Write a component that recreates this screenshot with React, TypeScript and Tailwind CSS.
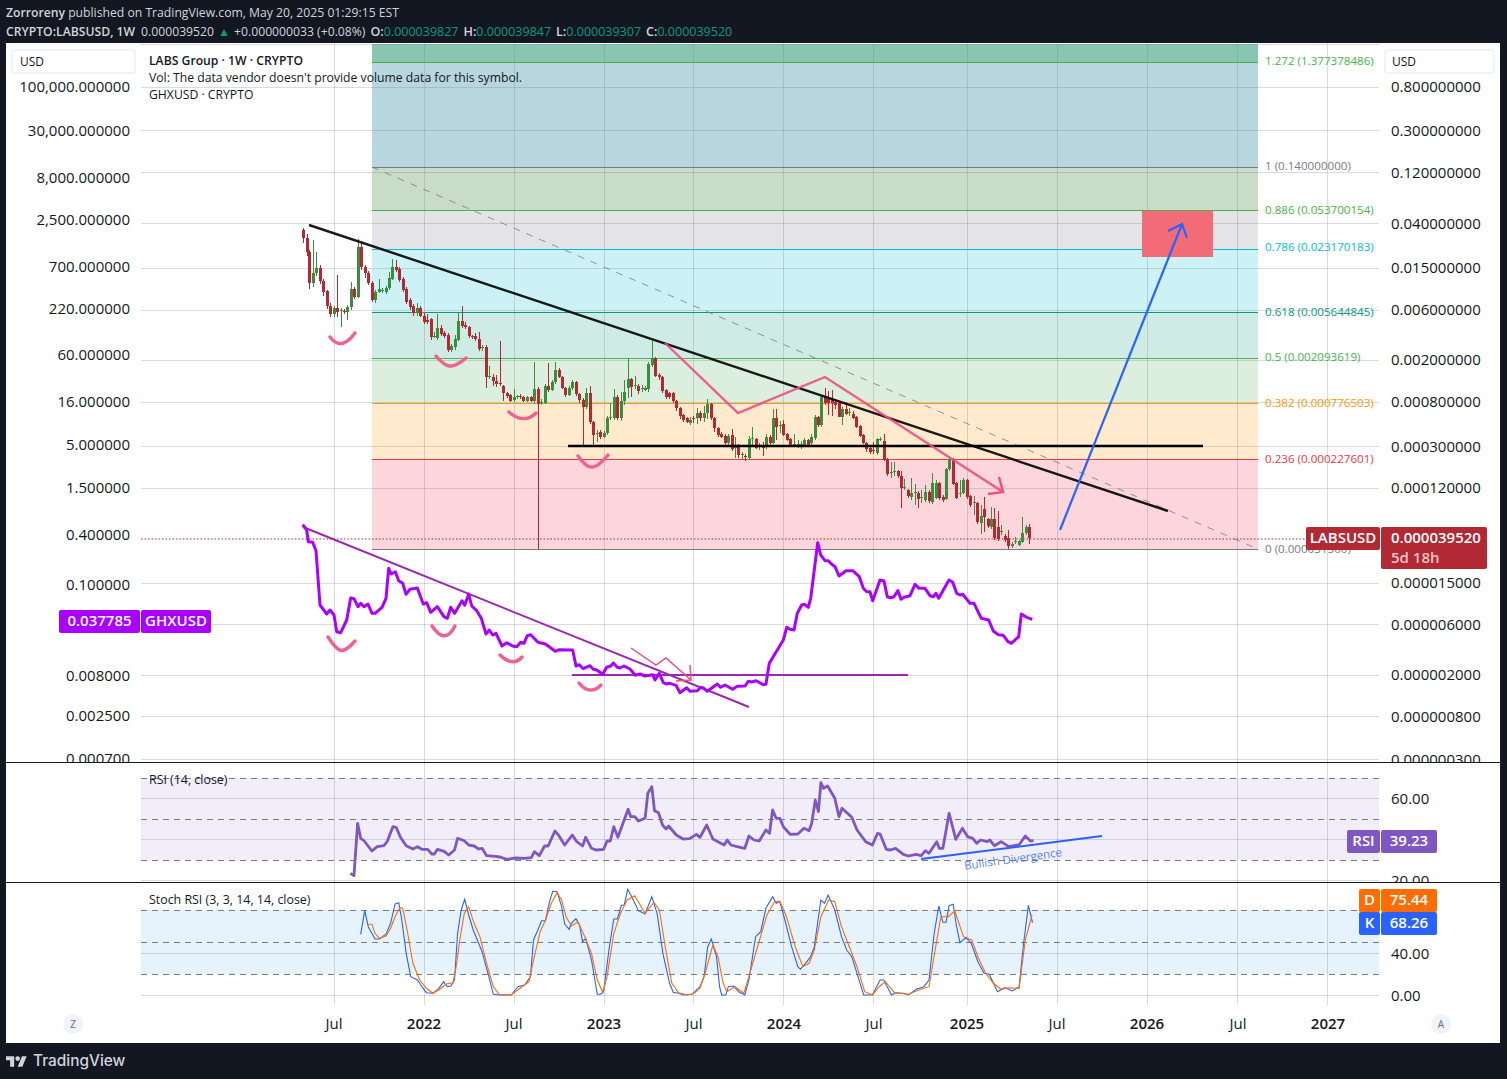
// weekly candles read off the chart: [x, open y, close y, wick top?, wick bottom?]
type Candle = [number, number, number, number?, number?]

const CANDLES_A: Candle[] = [
  [40,230,238,228,243],[50,238,252,234,256],[58,252,283,250,289],[70,283,273,240,287],[79,273,268,252,276],[91,268,281,265,284],[100,281,292,279,296],[112,291,306,290,309],[121,306,314,303,317],[133,314,308,306,317],[142,308,312,275,317],[154,311,310,308,327],[163,311,312,309,314],[172,312,307,305,320],[184,307,289,282,310],[193,289,297,287,299],[205,297,247,239,298],[214,247,267,243,270],[226,267,273,265,278],[235,273,283,271,285],[247,283,300,281,302],[256,300,292,290,303],[268,292,289,279,293],[277,291,290,288,293],[289,292,288,286,294],[298,288,278,272,290],[307,279,267,259,280],[319,267,270,260,272],[328,269,280,267,282],[340,279,290,277,292],[349,289,302,287,304],[361,300,307,298,310],[370,306,313,304,316],[382,313,308,303,316],[391,308,316,306,317],[403,316,322,313,324],[412,320,322,314,324],[424,319,337,318,340],[433,337,336,332,338],[442,338,328,314,340],[454,328,334,325,336],[463,333,336,331,338],[475,335,350,333,352],[484,350,346,344,352],[496,347,339,335,350],[505,340,321,313,341],[517,321,326,306,328],[526,325,327,322,329],[538,327,336,326,338],[547,336,337,335,339],[556,336,339,333,341],[568,339,349,332,351],[577,348,347,345,351],[589,347,377,345,388],[598,377,376,366,379],[610,377,381,374,386],[619,381,384,375,387],[631,383,384,341,386],[640,386,393,385,401],[652,393,396,392,398],[661,395,401,394,402],[673,400,397,389,402],[682,397,396,395,399],[691,396,397,394,399],[700,397,401,396,402],[712,401,397,396,402],[724,397,401,396,402],[733,401,389,362,404],[745,389,404,387,549],[754,403,402,399,405],[766,403,386,384,404],[775,386,390,363,392],[787,390,382,380,391],[796,382,370,362,384],[808,370,377,368,378],[817,377,388,376,389],[826,388,395,387,397],[838,395,388,386,396],[847,388,382,380,390],[859,382,394,381,396],[868,394,400,393,403],[880,400,407,398,446],[889,407,393,388,409],[901,393,422,386,424],[910,422,435,421,446],[922,434,433,430,442],[931,432,437,430,439],[943,437,433,431,438],[952,433,418,416,435],[961,418,417,403,420],[973,418,397,389,420],[982,397,418,395,420],[994,418,401,392,421],[1003,401,392,380,405],[1015,388,379,358,398],[1024,379,387,378,397],[1036,386,385,376,389],[1045,386,391,384,394],[1057,389,388,385,392],[1066,390,388,386,391],[1075,389,364,362,392],[1087,365,358,341,367],[1096,358,376,357,377],[1108,375,377,373,380],[1117,377,391,376,393],[1129,390,397,389,399],[1138,393,397,392,399],[1150,393,401,392,403],[1159,401,408,400,411],[1171,408,416,407,419],[1180,415,420,414,422],[1192,418,422,417,423],
]

const CANDLES_B: Candle[] = [
  [0,423,420,417,425],[10,418,419,416,423],[22,418,413,408,424],[31,413,418,411,421],[43,418,413,406,422],[52,413,404,399,419],[64,404,418,403,420],[73,418,428,417,432],[85,428,435,427,437],[94,434,437,432,438],[106,436,443,434,446],[115,443,436,434,445],[127,435,449,429,451],[136,448,445,437,458],[145,445,455,444,458],[157,455,454,452,459],[166,456,457,454,461],[178,458,439,436,459],[187,439,438,427,447],[199,439,448,438,449],[208,447,446,443,450],[220,446,448,442,456],[229,447,437,434,449],[241,437,443,435,447],[250,443,418,409,444],[259,418,427,409,440],[271,426,425,421,433],[280,424,435,420,436],[292,434,440,433,441],[301,439,445,438,447],[313,445,444,434,447],[325,445,444,440,448],[334,445,444,441,449],[343,445,440,438,447],[355,440,445,439,446],[364,443,437,434,445],[376,438,417,415,440],[385,417,425,416,427],[394,425,397,397,427],[406,397,403,388,405],[415,399,403,391,415],[427,399,403,390,416],[436,402,405,399,409],[448,403,417,401,417],[457,417,409,407,425],[469,409,414,402,415],[478,413,412,408,416],[490,414,418,411,419],[499,417,427,416,428],[511,426,436,425,437],[520,435,443,434,444],[529,443,449,442,452],[541,448,452,447,454],[550,450,451,442,454],[562,453,439,438,455],[571,440,439,437,441],[583,441,460,434,461],[592,459,474,458,476],[604,473,472,462,478],[613,472,471,462,476],[625,471,476,470,478],[634,476,488,471,508],[643,488,487,479,490],[655,490,496,489,498],[664,497,493,478,500],[676,493,492,484,505],[685,493,499,491,508],[694,498,497,490,503],[706,500,492,485,502],[718,492,501,490,503],[727,502,483,473,504],[739,498,483,480,499],[748,483,498,482,500],[760,497,500,495,502],[769,499,469,468,500],[778,469,459,457,471],[790,459,484,458,485],[799,483,498,482,499],[811,494,493,480,497],[820,493,480,478,494],[832,480,497,479,499],[841,496,505,495,507],[853,503,502,496,515],[862,503,522,502,524],[874,523,516,505,534],[883,509,517,497,532],[895,519,526,518,528],[904,527,519,507,529],[913,519,538,508,540],[925,527,539,511,541],[934,532,531,525,535],[946,536,540,534,542],[955,538,546,530,549],[967,546,544,542,548],[976,542,541,537,544],[988,545,541,540,546],[997,542,533,517,543],[1009,533,527,525,535],[1018,527,538,524,544],
]

// points are pixel readings from crops, mapped back to page coordinates
const at = (pts: number[][], ox: number, oy: number, sx: number, sy: number) =>
  pts.map(([x, y]) => `${(ox + x / sx).toFixed(1)},${(oy + y / sy).toFixed(1)}`).join(' ')

const GHX_A = [[38,14],[50,30],[55,65],[68,67],[78,92],[90,255],[110,282],[120,270],[132,285],[140,335],[152,338],[170,300],[182,234],[192,236],[204,260],[212,250],[222,260],[234,252],[246,280],[255,280],[276,262],[288,235],[296,145],[304,162],[316,155],[326,182],[338,190],[348,223],[360,208],[382,204],[400,252],[410,248],[422,277],[442,260],[462,290],[472,295],[482,262],[494,280],[516,242],[524,256],[536,222],[545,258],[560,272],[574,295],[588,342],[598,330],[608,345],[618,340],[636,378],[650,368],[668,378],[680,380],[692,367],[702,370],[712,347],[722,344],[744,367],[766,372],[796,394],[808,389],[848,390],[858,438],[868,434],[880,446],[900,437],[910,448],[920,450],[938,463],[950,442],[962,438],[970,429],[982,442],[990,444],[1002,438],[1020,447],[1036,466],[1050,462],[1065,468],[1088,464],[1095,480],[1108,460],[1120,488],[1130,492],[1140,490],[1158,496],[1170,518],[1190,503],[1200,514],[1222,512],[1232,502],[1240,504],[1252,514],[1282,492],[1292,502],[1305,495],[1328,508],[1342,499],[1365,498],[1375,484],[1385,486],[1398,482],[1420,494],[1428,492],[1438,430]]
const GHX_B = [[40,330],[50,292],[60,298],[72,300],[82,250],[95,225],[103,223],[115,232],[122,205],[143,38],[152,75],[165,92],[175,92],[185,103],[195,110],[207,138],[228,122],[248,122],[268,140],[280,175],[290,185],[300,185],[308,212],[330,150],[342,153],[352,200],[362,203],[372,200],[384,182],[393,208],[402,202],[420,197],[435,163],[448,175],[465,175],[480,197],[490,200],[498,190],[506,205],[537,150],[548,157],[560,190],[570,195],[578,193],[600,220],[612,220],[634,265],[656,270],[670,303],[685,314],[700,316],[714,335],[724,340],[746,320],[754,252],[770,262],[787,268]]

const RSI_A = [[785,340],[793,347],[801,190],[808,235],[816,243],[833,273],[845,260],[860,257],[867,245],[880,200],[888,203],[897,232],[910,257],[925,267],[935,260],[945,268],[958,268],[967,282],[973,282],[980,268],[995,274],[1005,285],[1018,270],[1025,235],[1040,242],[1050,255],[1062,258],[1072,267],[1080,265],[1090,287],[1110,289],[1120,291],[1135,298],[1155,294],[1175,295],[1190,293],[1197,275],[1208,287],[1220,258],[1228,258],[1243,213],[1252,227],[1265,255],[1282,225],[1292,245],[1305,258],[1312,232],[1325,265],[1335,270],[1352,268],[1360,243],[1367,243],[1375,200],[1384,232],[1407,148],[1413,170],[1422,170],[1430,183],[1445,175],[1451,100],[1460,80],[1466,152],[1475,158],[1484,195],[1492,207],[1498,198],[1515,225],[1530,237],[1545,236],[1560,223],[1568,232]]
const RSI_B = [[13,195],[25,237],[35,245],[47,255],[53,240],[60,255],[72,260],[87,265],[95,228],[105,240],[115,243],[128,210],[135,220],[141,150],[148,175],[155,175],[162,200],[175,223],[190,222],[202,205],[212,212],[217,190],[224,120],[230,155],[235,68],[240,85],[248,78],[262,115],[270,170],[276,145],[295,172],[305,210],[322,245],[335,255],[345,220],[350,222],[362,268],[370,270],[380,265],[395,283],[405,288],[420,283],[430,287],[438,272],[445,280],[460,245],[465,265],[472,265],[484,160],[497,238],[510,205],[520,230],[530,235],[538,250],[545,240],[558,245],[563,240],[572,257],[585,245],[600,260],[620,254],[632,228],[642,243],[648,242]]

const K_A = [[808,523],[817,452],[825,500],[840,537],[850,537],[865,522],[875,490],[885,432],[893,428],[900,480],[910,580],[920,650],[935,660],[945,680],[955,698],[970,700],[983,685],[994,665],[1002,680],[1010,678],[1018,660],[1025,520],[1033,450],[1041,418],[1050,465],[1060,510],[1080,575],[1095,650],[1105,703],[1120,705],[1145,705],[1160,680],[1175,675],[1188,650],[1195,540],[1205,510],[1213,482],[1222,482],[1230,430],[1238,394],[1248,395],[1258,440],[1265,492],[1275,508],[1280,490],[1290,476],[1298,495],[1305,545],[1312,535],[1325,600],[1338,703],[1345,703],[1352,695],[1365,560],[1375,477],[1383,477],[1392,436],[1398,436],[1406,388],[1415,410],[1430,452],[1445,462],[1460,410],[1472,460],[1485,580],[1500,670],[1508,697],[1520,700],[1530,705],[1550,703],[1568,680]]
const K_B = [[8,650],[15,560],[22,537],[32,590],[38,680],[42,705],[50,705],[55,680],[65,678],[75,695],[87,705],[95,660],[108,530],[118,515],[128,445],[141,410],[148,430],[155,425],[165,480],[178,560],[190,620],[195,628],[205,610],[215,590],[222,560],[235,420],[242,430],[249,405],[262,450],[275,530],[285,570],[295,590],[305,640],[318,705],[335,705],[350,660],[357,660],[372,705],[380,698],[395,700],[405,705],[420,688],[435,680],[445,660],[455,520],[464,438],[472,487],[478,487],[484,437],[492,433],[498,495],[505,548],[517,532],[527,550],[540,605],[552,640],[562,643],[578,695],[592,683],[607,693],[620,680],[628,560],[638,436],[646,488]]
const D_A = [[825,493],[833,493],[840,520],[850,535],[865,527],[875,505],[885,470],[895,443],[902,445],[912,510],[925,610],[940,660],[955,685],[970,700],[985,688],[1000,672],[1015,668],[1022,620],[1030,540],[1040,460],[1050,440],[1062,490],[1075,530],[1090,610],[1105,680],[1118,703],[1145,705],[1165,685],[1185,665],[1195,600],[1210,515],[1222,480],[1235,430],[1248,398],[1258,420],[1268,470],[1280,497],[1295,487],[1310,530],[1325,580],[1338,660],[1350,697],[1360,650],[1375,520],[1390,460],[1405,420],[1422,407],[1445,460],[1465,427],[1477,450],[1490,560],[1505,670],[1520,698],[1540,705],[1555,700],[1568,685]]
const D_B = [[10,640],[25,555],[35,590],[45,670],[52,695],[68,680],[85,700],[95,650],[110,570],[130,465],[145,425],[155,423],[168,470],[185,560],[200,620],[212,610],[222,570],[235,470],[250,420],[262,425],[275,500],[290,560],[305,620],[320,695],[335,705],[348,680],[360,665],[378,698],[405,703],[425,690],[445,680],[458,560],[468,470],[482,470],[495,453],[512,530],[528,540],[540,590],[555,640],[570,670],[585,688],[600,683],[620,685],[632,540],[645,465]]

const V_GRID = [334, 424, 514, 604, 693, 783, 873, 967, 1057, 1147, 1237, 1327]
const H_GRID = [44, 87, 130, 172, 223, 268, 310, 360, 402, 446, 488, 583, 624, 675, 716, 759]

const BANDS = [
  { y1: 44, y2: 62, fill: '#89c6b2' },
  { y1: 62, y2: 167, fill: '#b8d6dd' },
  { y1: 167, y2: 210, fill: '#c9dcc8' },
  { y1: 210, y2: 249, fill: '#e4e4e6' },
  { y1: 249, y2: 312, fill: '#ccf2f6' },
  { y1: 312, y2: 358, fill: '#cfebe6' },
  { y1: 358, y2: 403, fill: '#dceedd' },
  { y1: 403, y2: 459, fill: '#ffeacd' },
  { y1: 459, y2: 549, fill: '#fcd6da' },
]

const FIBS = [
  { y: 62, ty: 61, color: '#4caf50', label: '1.272 (1.377378486)' },
  { y: 167, ty: 166, color: '#787b86', label: '1 (0.140000000)' },
  { y: 210, ty: 210, color: '#4caf50', label: '0.886 (0.053700154)' },
  { y: 249, ty: 247, color: '#00bcd4', label: '0.786 (0.023170183)' },
  { y: 312, ty: 312, color: '#089981', label: '0.618 (0.005644845)' },
  { y: 358, ty: 357, color: '#4caf50', label: '0.5 (0.002093619)' },
  { y: 403, ty: 403, color: '#ff9800', label: '0.382 (0.000776503)' },
  { y: 459, ty: 459, color: '#f23645', label: '0.236 (0.000227601)' },
  { y: 549, ty: 549, color: '#787b86', label: '0 (0.000031500)' },
]

const LEFT_AXIS: [number, string][] = [
  [86, '100,000.000000'], [130, '30,000.000000'], [177, '8,000.000000'], [219, '2,500.000000'],
  [266, '700.000000'], [308, '220.000000'], [354, '60.000000'], [401, '16.000000'],
  [444, '5.000000'], [487, '1.500000'], [534, '0.400000'], [584, '0.100000'],
  [625, '0.030000'], [675, '0.008000'], [715, '0.002500'], [758, '0.000700'],
]
const RIGHT_AXIS: [number, string][] = [
  [86, '0.800000000'], [130, '0.300000000'], [172, '0.120000000'], [223, '0.040000000'],
  [267, '0.015000000'], [309, '0.006000000'], [359, '0.002000000'], [401, '0.000800000'],
  [446, '0.000300000'], [487, '0.000120000'], [582, '0.000015000'], [624, '0.000006000'],
  [674, '0.000002000'], [716, '0.000000800'], [759, '0.000000300'],
]
const TIME_AXIS: [number, string, boolean][] = [
  [334, 'Jul', false], [424, '2022', true], [514, 'Jul', false], [604, '2023', true],
  [694, 'Jul', false], [784, '2024', true], [874, 'Jul', false], [967, '2025', true],
  [1057, 'Jul', false], [1147, '2026', true], [1238, 'Jul', false], [1328, '2027', true],
]

const OHLC = [
  ['O:', '0.000039827'], ['H:', '0.000039847'], ['L:', '0.000039307'], ['C:', '0.000039520'],
]

// hand-drawn pink smiles under the lows
const SMILES = [
  'M330 337C336 345 344 348 355 333', 'M436 356C446 368 452 370 466 358',
  'M509 412C518 420 528 421 536 413', 'M578 456C588 470 594 472 608 455',
  'M328 637C338 652 342 656 355 641', 'M432 626C440 638 448 640 455 626',
  'M500 655C508 663 516 664 522 657', 'M579 683C586 692 594 692 601 685',
]

function Candles({ data, ox }: { data: Candle[]; ox: number }) {
  return (
    <g shapeRendering="crispEdges">
      {data.map(([zx, o, c, wt, wb]) => {
        const x = Math.round(ox + zx / 3)
        const top = Math.min(o, c)
        const h = Math.max(Math.abs(o - c), 1)
        const color = c < o ? '#388e3c' : '#b22833'
        return (
          <g key={zx} fill={color}>
            <rect x={x} y={wt ?? top - 2} width={1} height={(wb ?? top + h + 2) - (wt ?? top - 2)} />
            <rect x={x - 1} y={top} width={3} height={h} />
          </g>
        )
      })}
    </g>
  )
}

function VGrid({ y1, y2 }: { y1: number; y2: number }) {
  return (
    <g stroke="#787b86" strokeOpacity={0.27} shapeRendering="crispEdges">
      {V_GRID.map((x) => <line key={x} x1={x + 0.5} x2={x + 0.5} y1={y1} y2={y2} />)}
    </g>
  )
}

function HGrid({ ys }: { ys: number[] }) {
  return (
    <g stroke="#787b86" strokeOpacity={0.27} shapeRendering="crispEdges">
      {ys.map((y) => <line key={y} x1={141} x2={1379} y1={y + 0.5} y2={y + 0.5} />)}
    </g>
  )
}

function Dashed({ y }: { y: number }) {
  return <line x1={141} x2={1379} y1={y + 0.5} y2={y + 0.5} stroke="#787b86" strokeDasharray="6 5" shapeRendering="crispEdges" />
}

function MainPlot() {
  return (
    <svg width={1238} height={719} viewBox="141 43 1238 719" className="block shrink-0">
      {BANDS.map((b) => <rect key={b.y1} x={372} y={b.y1} width={886} height={b.y2 - b.y1} fill={b.fill} />)}
      <VGrid y1={43} y2={762} />
      <HGrid ys={H_GRID} />
      {FIBS.map((f) => (
        <g key={f.y}>
          <line x1={372} x2={1258} y1={f.y + 0.5} y2={f.y + 0.5} stroke={f.color} shapeRendering="crispEdges" />
          <text x={1265} y={f.ty} dy="0.35em" fontSize={11.6} fill={f.color}>{f.label}</text>
        </g>
      ))}
      <rect x={1142} y={211} width={71} height={46} fill="#f26c78" />
      <line x1={372} y1={167} x2={1258} y2={549} stroke="#787b86" strokeOpacity={0.8} strokeDasharray="7 7" />
      <line x1={141} x2={1306} y1={539} y2={539} stroke="#b22833" strokeDasharray="1.5 2" />
      <Candles data={CANDLES_A} ox={290} />
      <Candles data={CANDLES_B} ox={690} />
      <line x1={309} y1={225} x2={1168} y2={511} stroke="#000" strokeOpacity={0.9} strokeWidth={2.4} />
      <line x1={568} x2={1203} y1={446} y2={446} stroke="#000" strokeWidth={2.4} />
      <polyline points="665,343 738,413 825,377 1003,492" fill="none" stroke="#ec4f80" strokeWidth={2.4} strokeOpacity={0.9} />
      <polyline points="999,477 1003,492 988,494" fill="none" stroke="#ec4f80" strokeWidth={2.4} />
      <polyline points="1060,530 1182,224" fill="none" stroke="#2962ff" strokeWidth={2.2} />
      <polyline points="1168,231 1182,224 1187,238" fill="none" stroke="#2962ff" strokeWidth={2.2} />
      {SMILES.map((d) => (
        <path key={d} d={d} fill="none" stroke="#f06292" strokeWidth={3.5} strokeLinecap="round" />
      ))}
      <line x1={303} y1={527} x2={749} y2={707} stroke="#9c27b0" strokeWidth={2} />
      <line x1={572} x2={908} y1={675} y2={675} stroke="#9c27b0" strokeWidth={2} />
      <polyline points={`${at(GHX_A, 290, 520, 3, 3)} ${at(GHX_B, 770, 530, 3, 3)}`} fill="none" stroke="#aa00ff" strokeWidth={3} strokeLinejoin="round" />
      <polyline points="631,648 656,665 666,658 691,680" fill="none" stroke="#ec4f80" strokeWidth={1.5} />
      <polyline points="690,665 691,680 676,681" fill="none" stroke="#ec4f80" strokeWidth={1.5} />
    </svg>
  )
}

function RsiPlot() {
  return (
    <svg width={1238} height={119} viewBox="141 763 1238 119" className="block shrink-0">
      <rect x={141} y={778} width={1238} height={82} fill="#f2eef9" />
      <VGrid y1={763} y2={882} />
      <HGrid ys={[798, 839, 880]} />
      <Dashed y={778} />
      <Dashed y={819} />
      <Dashed y={860} />
      <polyline points={`${at(RSI_A, 0, 760, 2.24, 3)} ${at(RSI_B, 700, 760, 1.943, 3)}`} fill="none" stroke="#7e57c2" strokeWidth={2.8} strokeLinejoin="round" />
      <line x1={921} y1={859} x2={1102} y2={836} stroke="#2962ff" strokeWidth={2} />
      <text x={1013} y={859} dy="0.35em" textAnchor="middle" fontSize={11.5} fill="#2962ff" fillOpacity={0.8} transform="rotate(-8 1013 859)">Bullish Divergence</text>
    </svg>
  )
}

function StochPlot() {
  return (
    <svg width={1238} height={122} viewBox="141 883 1238 122" className="block shrink-0">
      <rect x={141} y={910} width={1238} height={64} fill="#e6f3fd" />
      <VGrid y1={883} y2={1005} />
      <HGrid ys={[953, 995]} />
      <Dashed y={910} />
      <Dashed y={942} />
      <Dashed y={974} />
      <polyline points={`${at(K_A, 0, 760, 2.24, 3)} ${at(K_B, 700, 760, 1.943, 3)}`} fill="none" stroke="#2962ff" strokeWidth={1.1} />
      <polyline points={`${at(D_A, 0, 760, 2.24, 3)} ${at(D_B, 700, 760, 1.943, 3)}`} fill="none" stroke="#ff6d00" strokeWidth={1.1} />
    </svg>
  )
}

function AxisLabels({ items, paneTop, side }: { items: [number, string][]; paneTop: number; side: 'left' | 'right' }) {
  return (
    <>
      {items.map(([y, label]) => (
        <span
          key={label}
          className={side === 'left'
            ? 'absolute right-[11px] text-[15px] leading-[20px] text-[#131722] whitespace-nowrap'
            : 'absolute left-[12px] text-[15px] leading-[20px] text-[#131722] whitespace-nowrap'}
          style={{ top: y - paneTop - 10 }}
        >
          {label}
        </span>
      ))}
    </>
  )
}

function UsdButton({ className }: { className: string }) {
  return (
    <div className={`mt-[6px] flex h-[25px] items-center rounded border-2 border-[#f0f3fa] bg-white text-[12px] text-[#131722] ${className}`}>USD</div>
  )
}

function Tag({ className, children }: { className: string; children: React.ReactNode }) {
  return <div className={`flex items-center justify-center rounded-[2px] pb-[2px] text-[15px] font-semibold text-white ${className}`}>{children}</div>
}

function RoundBtn({ label }: { label: string }) {
  return (
    <div className="flex h-[20px] w-[20px] items-center justify-center rounded-full bg-[#f0f3fa] text-[10px] text-[#6a6d78]">{label}</div>
  )
}

export default function App() {
  return (
    <div className="flex h-[1079px] w-[1507px] flex-col overflow-hidden bg-[#131722] font-['Open_Sans',sans-serif]">
      <header className="h-[43px] shrink-0 pl-[6px] pt-[3px] text-[12.2px] leading-[19px] text-[#d1d4dc] whitespace-nowrap">
        <div><span className="font-semibold">Zorroreny</span> published on TradingView.com, May 20, 2025 01:29:15 EST</div>
        <div className="flex">
          <span className="font-semibold">CRYPTO:LABSUSD, 1W</span>
          <span className="ml-[6px]">0.000039520</span>
          <span className="ml-[4px] text-[#089981]">▲</span>
          <span className="ml-[4px]">+0.000000033 (+0.08%)</span>
          <div className="ml-[5px] flex gap-[5px] text-[12.5px]">
            {OHLC.map(([k, v]) => (
              <span key={k}><span className="font-semibold">{k}</span><span className="text-[#089981]">{v}</span></span>
            ))}
          </div>
        </div>
      </header>

      <main className="ml-[6px] flex h-[1000px] w-[1494px] shrink-0 flex-col bg-white">
        {/* price pane */}
        <section className="relative flex h-[720px] shrink-0 overflow-hidden border-b border-[#131722]">
          <div className="relative w-[135px] shrink-0 px-[5px]">
            <UsdButton className="pl-[7px]" />
            <AxisLabels items={LEFT_AXIS} paneTop={43} side="left" />
          </div>
          <MainPlot />
          <div className="relative w-[121px] shrink-0 pl-[5px] pr-[5px]">
            <UsdButton className="pl-[6px]" />
            <AxisLabels items={RIGHT_AXIS} paneTop={43} side="right" />
          </div>

          <div className="absolute left-[143px] top-[9px] text-[12.2px] leading-[17px] text-[#131722]">
            <div className="font-semibold">LABS Group · 1W · CRYPTO</div>
            <div>Vol: The data vendor doesn't provide volume data for this symbol.</div>
            <div>GHXUSD · CRYPTO</div>
          </div>

          <div className="absolute left-[1300px] top-[484px] flex items-start gap-px">
            <Tag className="h-[23px] w-[74px] bg-[#b22833]">LABSUSD</Tag>
            <div className="h-[42px] w-[106px] rounded-[2px] bg-[#b22833] pl-[10px] pt-[1px] text-[15px] font-semibold leading-[18px] text-white">
              <div>0.000039520</div>
              <div className="mt-[2px] text-[#f0c4c8]">5d 18h</div>
            </div>
          </div>
          <div className="absolute left-[53px] top-[567px] flex gap-px">
            <Tag className="h-[23px] w-[81px] bg-[#aa00ff]">0.037785</Tag>
            <Tag className="h-[23px] w-[70px] bg-[#aa00ff]">GHXUSD</Tag>
          </div>
        </section>

        {/* RSI pane */}
        <section className="relative flex h-[120px] shrink-0 overflow-hidden border-b border-[#131722]">
          <div className="w-[135px] shrink-0" />
          <RsiPlot />
          <div className="relative w-[121px] shrink-0"><AxisLabels items={[[798, '60.00'], [880, '20.00']]} paneTop={763} side="right" /></div>
          <span className="absolute left-[143px] top-[8px] text-[12.4px] leading-[17px] text-[#131722]">RSI (14, close)</span>
          <div className="absolute left-[1341px] top-[67px] flex gap-px">
            <Tag className="h-[23px] w-[33px] bg-[#7e57c2]">RSI</Tag>
            <Tag className="h-[23px] w-[56px] bg-[#7e57c2]">39.23</Tag>
          </div>
        </section>

        {/* stoch pane */}
        <section className="relative flex h-[122px] shrink-0 overflow-hidden">
          <div className="w-[135px] shrink-0" />
          <StochPlot />
          <div className="relative w-[121px] shrink-0"><AxisLabels items={[[953, '40.00'], [995, '0.00']]} paneTop={883} side="right" /></div>
          <span className="absolute left-[143px] top-[8px] text-[12.4px] leading-[17px] text-[#131722]">Stoch RSI (3, 3, 14, 14, close)</span>
          <div className="absolute left-[1353px] top-[6px] flex flex-col">
            <div className="flex gap-px">
              <Tag className="h-[23px] w-[21px] bg-[#ff6d00]">D</Tag>
              <Tag className="h-[23px] w-[56px] bg-[#ff6d00]">75.44</Tag>
            </div>
            <div className="flex gap-px">
              <Tag className="h-[23px] w-[21px] bg-[#2962ff]">K</Tag>
              <Tag className="h-[23px] w-[56px] bg-[#2962ff]">68.26</Tag>
            </div>
          </div>
        </section>

        {/* time axis */}
        <section className="relative flex h-[38px] shrink-0 items-center justify-between pl-[57px] pr-[49px]">
          {TIME_AXIS.map(([x, label, bold]) => (
            <span
              key={x}
              className={bold
                ? 'absolute top-[8px] -translate-x-1/2 text-[15px] font-semibold leading-[20px] text-[#131722]'
                : 'absolute top-[8px] -translate-x-1/2 text-[15px] leading-[20px] text-[#131722]'}
              style={{ left: x - 6 }}
            >
              {label}
            </span>
          ))}
          <RoundBtn label="Z" />
          <RoundBtn label="A" />
        </section>
      </main>

      <footer className="flex h-[36px] shrink-0 items-center gap-[6px] pl-[6px] text-[#d1d4dc]">
        <svg width={21} height={13} viewBox="0 4 36 18" fill="currentColor">
          <path d="M14 22H7V11H0V4h14v18zM28 22h-8l7.5-18h8L28 22z" />
          <circle cx="20" cy="8" r="4" />
        </svg>
        <span className="text-[15.4px] font-medium font-['Inter',sans-serif]">TradingView</span>
      </footer>
    </div>
  )
}
